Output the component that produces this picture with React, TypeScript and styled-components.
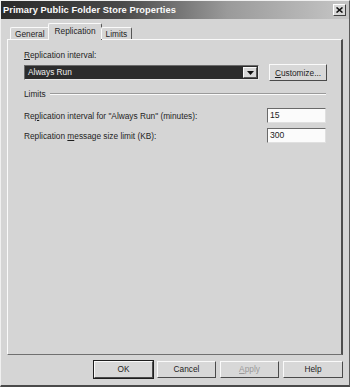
import styled, { createGlobalStyle } from "styled-components";

const GlobalStyle = createGlobalStyle`
  html, body {
    margin: 0;
    padding: 0;
    background: #d5d5d5;
  }
  * {
    box-sizing: border-box;
  }
`;

const Window = styled.div`
  width: 350px;
  height: 387px;
  display: flex;
  flex-direction: column;
  background: #d5d5d5;
  border-top: 1px solid #f0f0f0;
  border-left: 1px solid #f0f0f0;
  border-right: 1px solid #5a5a5a;
  border-bottom: 2px solid #4a4a4a;
  font-family: "Liberation Sans", Arial, sans-serif;
  font-size: 8.3px;
  color: #1e1e1e;
  overflow: hidden;
`;

const TitleBar = styled.div`
  height: 18px;
  flex: none;
  display: flex;
  align-items: center;
  justify-content: space-between;
  padding: 0 3px 0 2px;
  background: linear-gradient(to right, #2a2a2a 0%, #4a4a4a 35%, #9a9a9a 65%, #c6c6c6 100%);
`;

const Title = styled.span`
  color: #fafafa;
  font-weight: bold;
  font-size: 9.3px;
  letter-spacing: 0.05px;
`;

const CloseBox = styled.div`
  width: 13px;
  height: 12px;
  background: #d8d8d8;
  border-top: 1px solid #fff;
  border-left: 1px solid #fff;
  border-right: 1px solid #404040;
  border-bottom: 1px solid #404040;
  display: flex;
  align-items: center;
  justify-content: center;
`;

const Body = styled.div`
  flex: 1;
  display: flex;
  flex-direction: column;
  padding: 4px 6px 0 6px;
`;

const TabStrip = styled.div`
  display: flex;
  align-items: flex-end;
  height: 16px;
  padding-left: 3px;
  position: relative;
  z-index: 1;
`;

const Tab = styled.div<{ $active?: boolean }>`
  height: ${(p) => (p.$active ? "17px" : "12px")};
  margin-bottom: ${(p) => (p.$active ? "-1px" : "0")};
  margin-left: ${(p) => (p.$active ? "-2px" : "0")};
  margin-right: ${(p) => (p.$active ? "-1px" : "0")};
  padding: ${(p) => (p.$active ? "2px 5px 0 6px" : "1px 4px 0 4px")};
  background: #d5d5d5;
  border-top: 1px solid #fafafa;
  border-left: 1px solid #fafafa;
  border-right: 1px solid #555;
  border-radius: 2px 2px 0 0;
  white-space: nowrap;
`;

const Panel = styled.div`
  flex: 1;
  display: flex;
  flex-direction: column;
  border-top: 1px solid #fafafa;
  border-left: 1px solid #fafafa;
  border-right: 2px solid #4e4e4e;
  border-bottom: 1px solid #707070;
  padding: 9px 14px 0 16px;
`;

const FieldLabel = styled.div`
  height: 12px;
  line-height: 12px;
`;

const U = styled.span`
  text-decoration: underline;
`;

const ComboRow = styled.div`
  display: flex;
  align-items: center;
  gap: 10px;
  margin-top: 3px;
  height: 17px;
`;

const Combo = styled.div`
  flex: 1;
  height: 15px;
  display: flex;
  background: #2c2c2c;
  border-top: 1px solid #6a6a6a;
  border-left: 1px solid #6a6a6a;
  border-right: 1px solid #e8e8e8;
  border-bottom: 1px solid #e8e8e8;
  padding: 1px;
`;

const ComboText = styled.div`
  flex: 1;
  color: #f0f0f0;
  line-height: 11px;
  padding-left: 2px;
`;

const ArrowButton = styled.div`
  width: 14px;
  background: #d8d8d8;
  border-top: 1px solid #fafafa;
  border-left: 1px solid #fafafa;
  border-right: 1px solid #555;
  border-bottom: 1px solid #555;
  display: flex;
  align-items: center;
  justify-content: center;
`;

const Button = styled.div<{ $width?: number; $default?: boolean; $disabled?: boolean }>`
  width: ${(p) => p.$width ?? 60}px;
  height: 17px;
  flex: none;
  display: flex;
  align-items: center;
  justify-content: center;
  background: #d8d8d8;
  color: ${(p) => (p.$disabled ? "#9a9a9a" : "#1e1e1e")};
  border-top: 1px solid #fafafa;
  border-left: 1px solid #fafafa;
  border-right: 1px solid #4a4a4a;
  border-bottom: 1px solid #4a4a4a;
  outline: ${(p) => (p.$default ? "1px solid #1e1e1e" : "none")};
  outline-offset: 0;
`;

const GroupHeader = styled.div`
  display: flex;
  align-items: center;
  gap: 4px;
  margin-top: 7px;
  height: 12px;
`;

const GroupRule = styled.div`
  flex: 1;
  height: 2px;
  border-top: 1px solid #9a9a9a;
  border-bottom: 1px solid #fafafa;
  margin-right: 1px;
`;

const FieldRow = styled.div<{ $top: number }>`
  display: flex;
  align-items: center;
  justify-content: space-between;
  margin-top: ${(p) => p.$top}px;
  height: 15px;
`;

const TextBox = styled.div`
  width: 59px;
  height: 15px;
  background: #fbfbfb;
  border-top: 1px solid #6a6a6a;
  border-left: 1px solid #6a6a6a;
  border-right: 1px solid #e0e0e0;
  border-bottom: 1px solid #e0e0e0;
  padding-left: 2px;
  line-height: 13px;
  font-size: 8.6px;
  margin-right: 1px;
`;

const Footer = styled.div`
  height: 30px;
  flex: none;
  display: flex;
  align-items: center;
  justify-content: flex-end;
  gap: 4px;
  padding-bottom: 2px;
`;

const App = () => {
  return (
    <>
      <GlobalStyle />
      <Window>
        <TitleBar>
          <Title>Primary Public Folder Store Properties</Title>
          <CloseBox>
            <svg width="7" height="6" viewBox="0 0 7 6">
              <path d="M0.5 0.5 L6.5 5.5 M6.5 0.5 L0.5 5.5" stroke="#111" strokeWidth="1.6" />
            </svg>
          </CloseBox>
        </TitleBar>
        <Body>
          <TabStrip>
            <Tab>General</Tab>
            <Tab $active>Replication</Tab>
            <Tab>Limits</Tab>
          </TabStrip>
          <Panel>
            <FieldLabel>
              <U>R</U>eplication interval:
            </FieldLabel>
            <ComboRow>
              <Combo>
                <ComboText>Always Run</ComboText>
                <ArrowButton>
                  <svg width="7" height="4" viewBox="0 0 7 4">
                    <path d="M0 0 H7 L3.5 4 Z" fill="#111" />
                  </svg>
                </ArrowButton>
              </Combo>
              <Button $width={58}>
                <span>
                  <U>C</U>ustomize...
                </span>
              </Button>
            </ComboRow>
            <GroupHeader>
              <span>Limits</span>
              <GroupRule />
            </GroupHeader>
            <FieldRow $top={8}>
              <span>
                Re<U>p</U>lication interval for "Always Run" (minutes):
              </span>
              <TextBox>15</TextBox>
            </FieldRow>
            <FieldRow $top={5}>
              <span>
                Replication <U>m</U>essage size limit (KB):
              </span>
              <TextBox>300</TextBox>
            </FieldRow>
          </Panel>
          <Footer>
            <Button $width={59} $default>OK</Button>
            <Button $width={59}>Cancel</Button>
            <Button $width={59} $disabled>
              <span>
                <U>A</U>pply
              </span>
            </Button>
            <Button $width={60}>Help</Button>
          </Footer>
        </Body>
      </Window>
    </>
  );
};

export default App;
